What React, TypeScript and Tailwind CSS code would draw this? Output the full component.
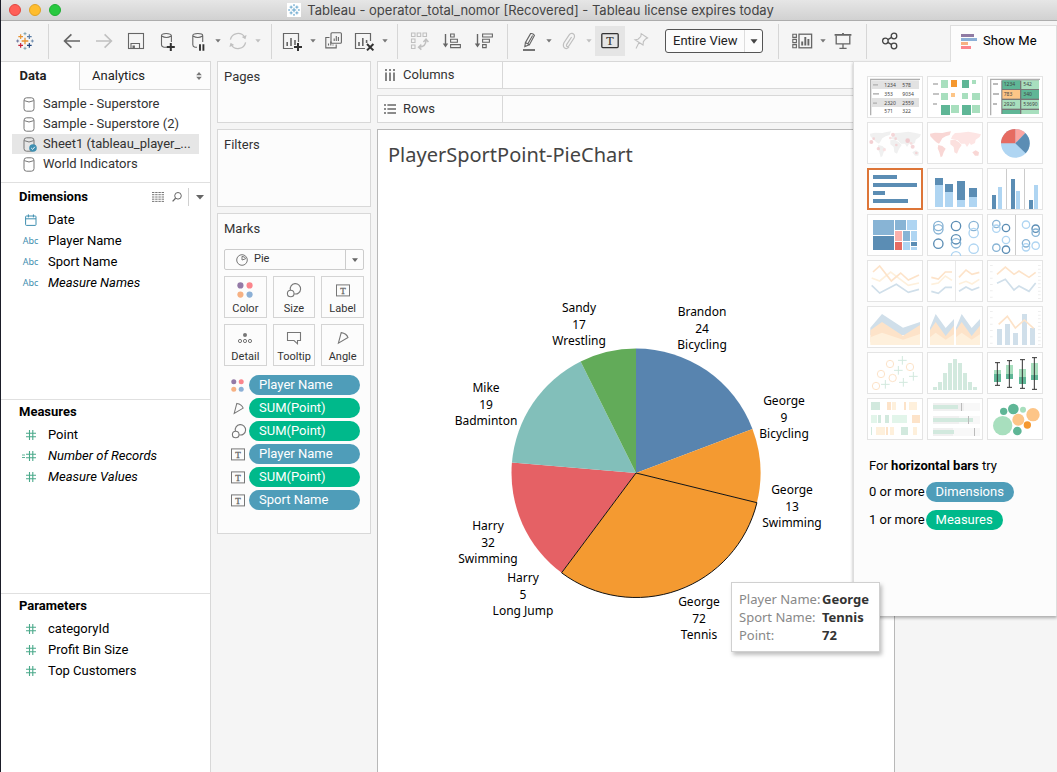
import React from "react";

type Kids = { children?: React.ReactNode };

const UI = "font-[Roboto,'Liberation_Sans',sans-serif]";
const BLUE = "#5b8db4";
const SKY = "#afd5f2";

/* ---------- small drawing helpers ---------- */

function Icon({ children, tone = "text-[#666]", size = "size-5" }: Kids & { tone?: string; size?: string }) {
  return (
    <svg viewBox="0 0 20 20" aria-hidden="true" fill="none" stroke="currentColor" strokeWidth="1.1" className={`shrink-0 overflow-visible ${size} ${tone}`}>
      {children}
    </svg>
  );
}

function Caret({ tone = "text-[#777]" }: { tone?: string }) {
  return (
    <svg viewBox="0 0 6 4" aria-hidden="true" className={`h-1 w-[6px] ${tone}`}>
      <path d="M0.3 0.3H5.7L3 3.6Z" fill="currentColor" />
    </svg>
  );
}

function Cylinder({ className = "h-[15px] w-3" }: { className?: string }) {
  return (
    <svg viewBox="0 0 12 15" aria-hidden="true" fill="none" stroke="#777" className={`shrink-0 overflow-visible ${className}`}>
      <rect x="1" y="0.8" width="10" height="13.4" rx="2.6" />
      <path d="M1.2 3.6Q6 6.4 10.8 3.6" />
    </svg>
  );
}

function Cross({ x, y, r, c, w = 2.5 }: { x: number; y: number; r: number; c: string; w?: number }) {
  return <path d={`M${x - r} ${y}H${x + r}M${x} ${y - r}V${y + r}`} stroke={c} strokeWidth={w} fill="none" />;
}

function Logo({ mono = false, className = "" }: { mono?: boolean; className?: string }) {
  const k = (c: string) => (mono ? "#4a96c4" : c);
  return (
    <svg viewBox="0 0 54 54" aria-hidden="true" className={className}>
      <Cross x={27} y={27} r={10} c={k("#e8912d")} w={3.8} />
      <Cross x={14} y={14} r={7} c={k("#e8912d")} w={3.4} />
      <Cross x={40} y={14} r={7} c={k("#5c7ea6")} w={3.4} />
      <Cross x={14} y={40} r={7} c={k("#c72037")} w={3.4} />
      <Cross x={40} y={40} r={7} c={k("#1f447e")} w={3.4} />
      <Cross x={27} y={5} r={4.5} c={k("#7199a6")} />
      <Cross x={27} y={49} r={4.5} c={k("#7199a6")} />
      <Cross x={5} y={27} r={4.5} c={k("#5c6692")} />
      <Cross x={49} y={27} r={4.5} c={k("#5c7ea6")} />
    </svg>
  );
}

function Dots({ className = "size-4" }: { className?: string }) {
  return (
    <svg viewBox="0 0 14 14" aria-hidden="true" className={className}>
      <circle cx="3" cy="3" r="2.7" fill="#9379a6" />
      <circle cx="11" cy="3" r="2.7" fill="#fb858c" />
      <circle cx="3" cy="11" r="2.7" fill="#f6b183" />
      <circle cx="11" cy="11" r="2.7" fill="#8cb0d6" />
    </svg>
  );
}

function SizeIcon({ className = "size-4" }: { className?: string }) {
  return (
    <svg viewBox="0 0 16 16" aria-hidden="true" fill="none" stroke="#777" strokeWidth="1.1" className={className}>
      <path d="M4.4 8.2A5.2 5.2 0 1 1 8.3 11.9" />
      <circle cx="4.7" cy="11.5" r="3.3" />
    </svg>
  );
}

function TIcon({ className = "h-[13px] w-[14px]" }: { className?: string }) {
  return (
    <svg viewBox="0 0 14 13" aria-hidden="true" className={className}>
      <rect x="0.5" y="0.9" width="13" height="11" fill="none" stroke="#777" />
      <text x="7" y="9.6" textAnchor="middle" fontSize="9" fill="#666" stroke="#666" strokeWidth="0.3" className="font-['Liberation_Serif',serif]">T</text>
    </svg>
  );
}

function AngleIcon({ className = "size-4" }: { className?: string }) {
  return (
    <svg viewBox="0 0 16 16" aria-hidden="true" fill="none" stroke="#777" strokeWidth="1.1" className={className}>
      <path d="M6.2 2.6L3.4 13.2L13 7.6Q11.6 3.4 6.2 2.6Z" />
    </svg>
  );
}

function Hash({ calc = false }: { calc?: boolean }) {
  return (
    <svg viewBox="0 0 20 12" aria-hidden="true" stroke="#4aa98a" strokeWidth="1.1" className="h-3 w-5 shrink-0">
      <path d="M8.5 1V11M11.8 1V11M5 4.3H15M5 7.7H15" />
      {calc && <path d="M1 5H4M1 7.5H4" strokeWidth="0.9" />}
    </svg>
  );
}

/* ---------- toolbar ---------- */

function Tool({ label, w = "w-8", active = false, children }: Kids & { label: string; w?: string; active?: boolean }) {
  return (
    <button type="button" aria-label={label} className={`flex h-[30px] shrink-0 items-center justify-center ${w} ${active ? "bg-[#e5e5e5]" : ""}`}>
      {children}
    </button>
  );
}

const Sep = ({ gap = "mx-[7px]" }: { gap?: string }) => <span className={`h-[35px] w-px shrink-0 bg-[#d6d6d6] ${gap}`} />;

function Toolbar() {
  const dim = "text-[#c0c0c0]";
  return (
    <div className="flex h-10 items-center pl-3">
      <button type="button" aria-label="Start page" className="mr-1 flex h-[30px] w-6 items-center justify-center">
        <Logo className="size-[18px]" />
      </button>
      <Sep />
      <Tool label="Undo"><Icon><path d="M18 10H2.6M9.4 3.4L2.6 10L9.4 16.6" strokeWidth="1.7" /></Icon></Tool>
      <Tool label="Redo"><Icon tone={dim}><path d="M2 10H17.4M10.6 3.4L17.4 10L10.6 16.6" strokeWidth="1.6" /></Icon></Tool>
      <Tool label="Save">
        <Icon><rect x="2.5" y="2.5" width="15" height="15" /><path d="M5 17.5V12.5H13.5V17.5" /><rect x="6.5" y="14.5" width="2.4" height="3" fill="currentColor" stroke="none" /></Icon>
      </Tool>
      <Tool label="New data source">
        <Icon><path d="M11 16.2H6Q3.5 15.8 3.5 13.8V4.6Q3.5 2.5 8.2 2.5T13.4 4.6V11M3.7 5Q8.4 8 13.2 5" /><path d="M8.8 16H16.8M12.8 12V20" stroke="#333" strokeWidth="2" /></Icon>
      </Tool>
      <Tool label="Pause auto updates" w="w-7">
        <Icon><path d="M9 16.2H7Q4.8 15.8 4.8 13.8V4.6Q4.8 2.5 9.8 2.5T14.7 4.6V11M5 5Q9.8 8 14.5 5" /><path d="M12 13.2V19.8M15.4 13.2V19.8" stroke="#333" strokeWidth="1.9" /></Icon>
      </Tool>
      <Tool label="Auto update options" w="w-3"><Caret /></Tool>
      <Tool label="Run update" w="w-7">
        <Icon tone={dim}><path d="M2.4 8.6A7.8 7.8 0 0 1 16.6 6M17.6 11.4A7.8 7.8 0 0 1 3.4 14" strokeWidth="1.3" /><path d="M18.6 4L17.4 8.2L13.8 6ZM1.4 16L2.6 11.8L6.2 14Z" fill="currentColor" stroke="none" /></Icon>
      </Tool>
      <Tool label="Update options" w="w-3"><Caret tone={dim} /></Tool>
      <Sep />
      <Tool label="New worksheet" w="w-7">
        <Icon><path d="M10 17.5H0.5V2.5H15.5V11" strokeWidth="1.2" /><path d="M4.2 11V15M8 7V15M12 9V14" strokeWidth="1.6" /><path d="M11 16H19M15 12V20" stroke="#333" strokeWidth="2" /></Icon>
      </Tool>
      <Tool label="New worksheet options" w="w-3"><Caret /></Tool>
      <Tool label="Duplicate" w="w-7">
        <Icon><rect x="8" y="1.8" width="10.4" height="10.4" rx="1" /><path d="M6.5 6.5H2.8V16.9H13.2V13.6M5.5 12.5V14.5M7.8 10.5V14.5M10 13.4V14.5M11.2 7.5V10M13.3 5V10M15.4 6V10" /></Icon>
      </Tool>
      <Tool label="Clear sheet">
        <Icon><path d="M12 17.5H2.5V2.5H17.5V10" strokeWidth="1.2" /><path d="M6 11V15M9.8 7V15M13.6 9V12" strokeWidth="1.6" /><path d="M14 13L20.4 19.4M20.4 13L14 19.4" stroke="#333" strokeWidth="2" /></Icon>
      </Tool>
      <Tool label="Clear options" w="w-3"><Caret /></Tool>
      <Sep gap="mx-1.5" />
      <Tool label="Swap rows and columns">
        <Icon tone={dim}><path d="M1.5 2H5V5.5H1.5ZM7.2 2H10.7V5.5H7.2ZM13 2H16.5V5.5H13ZM1.5 8H5V11.5H1.5ZM1.5 14H5V17.5H1.5Z" /><path d="M9 16.2Q16 16 16 9M11.4 13.6L8.6 16.2L11.4 18.6M13.4 11L16 8.2L18.4 11" strokeWidth="1.5" /></Icon>
      </Tool>
      <Tool label="Sort ascending">
        <Icon><path d="M3.5 3V14" strokeWidth="1.4" /><path d="M0.8 12.5H6.2L3.5 16.6Z" fill="currentColor" stroke="none" /><path d="M8.6 3H12.2V6H8.6ZM8.6 8.3H15.4V11.3H8.6ZM8.6 13.6H18.4V16.6H8.6Z" /></Icon>
      </Tool>
      <Tool label="Sort descending">
        <Icon><path d="M3.5 3V14" strokeWidth="1.4" /><path d="M0.8 12.5H6.2L3.5 16.6Z" fill="currentColor" stroke="none" /><path d="M8.6 3H18.4V6H8.6ZM8.6 8.3H15.4V11.3H8.6ZM8.6 13.6H12.2V16.6H8.6Z" /></Icon>
      </Tool>
      <Sep />
      <Tool label="Highlight" w="w-7">
        <Icon><path d="M6.4 11.6L11.6 2.6Q14 2 15.4 4.4L10.4 13.8ZM6.4 11.6L5.8 15.6L10.4 13.8M9 12.6L13.6 4.4" /><path d="M4 19H16" strokeWidth="1.8" /></Icon>
      </Tool>
      <Tool label="Highlight options" w="w-3"><Caret /></Tool>
      <Tool label="Group members" w="w-7">
        <Icon tone={dim}><path d="M12.6 6L7.6 13.6Q7 15.4 8.6 15.8L9.8 15L15.2 6.8Q16.4 3.4 13.2 2.4Q11.4 2 10.2 3.8L4.8 12Q3.4 16 6.4 17.4Q8.6 18 10 16" strokeWidth="1.2" /></Icon>
      </Tool>
      <Tool label="Group options" w="w-3"><Caret tone={dim} /></Tool>
      <Tool label="Show mark labels" w="w-[30px]" active>
        <Icon tone="text-[#333]"><rect x="1.8" y="2.6" width="16.4" height="14" rx="1" strokeWidth="1.3" /><text x="10" y="13.6" textAnchor="middle" fontSize="12" fill="currentColor" stroke="currentColor" strokeWidth="0.2" className="font-['Liberation_Serif',serif]">T</text></Icon>
      </Tool>
      <Tool label="Fix axes">
        <Icon tone={dim}><path d="M10.2 2.6L16.6 7L14.6 8L12.4 10.6L12 14L4 8.8L7 8.2L9.8 5.6ZM8 11.4L5 17.4" /></Icon>
      </Tool>
      <div className="relative mx-2 flex h-6 w-[98px] shrink-0 items-center">
        <select aria-label="Fit" defaultValue="Entire View" className="h-full w-full appearance-none rounded-[3px] border border-[#555] bg-[#fcfcfc] pl-[7px] text-[13px] text-[#222]">
          <option>Entire View</option>
          <option>Standard</option>
        </select>
        <span className="pointer-events-none absolute inset-y-px right-px flex w-[18px] items-center justify-center border-l border-[#ddd]">
          <svg viewBox="0 0 8 5" aria-hidden="true" className="h-[5px] w-2"><path d="M0.5 0.3H7.5L4 4.8Z" fill="#444" /></svg>
        </span>
      </div>
      <Sep />
      <Tool label="Show cards">
        <Icon><path d="M0.8 3.2H4.4V6.4H0.8ZM0.8 8.4H4.4V11.6H0.8ZM0.8 13.6H4.4V16.8H0.8Z" /><rect x="7" y="3.2" width="12.6" height="13.6" strokeWidth="1.3" /><path d="M10.2 10.6V14.6M13.3 6V14.6M16.4 8V14.6" strokeWidth="1.9" /></Icon>
      </Tool>
      <Tool label="Card options" w="w-[9px]"><Caret /></Tool>
      <Tool label="Presentation mode">
        <Icon><path d="M1.6 3.8H18.4M10 2V3.8" strokeWidth="1.8" /><path d="M3.2 4.4V12.8H16.8V4.4M10 12.8V17.2M6.4 17.4H13.6" strokeWidth="1.3" /></Icon>
      </Tool>
      <Sep />
      <Tool label="Share">
        <Icon tone="text-[#444]"><circle cx="5.4" cy="10" r="2.8" strokeWidth="1.3" /><circle cx="14" cy="5" r="2.8" strokeWidth="1.3" /><circle cx="14" cy="15" r="2.8" strokeWidth="1.3" /><path d="M7.8 8.6L11.6 6.4M7.8 11.4L11.6 13.6" strokeWidth="1.3" /></Icon>
      </Tool>
    </div>
  );
}

/* ---------- data pane ---------- */

const sources = [
  { name: "Sample - Superstore" },
  { name: "Sample - Superstore (2)" },
  { name: "Sheet1 (tableau_player_...", on: true },
  { name: "World Indicators" },
];

const abc = <span className="font-['Noto_Sans',sans-serif] text-[9px] text-[#3f8fb0]">Abc</span>;

type FieldRow = { name: string; icon: React.ReactNode; italic?: boolean };

function Field({ name, icon, italic }: FieldRow) {
  return (
    <li className="flex h-[21px] items-center">
      <span className="mr-2 flex w-[19px] shrink-0 items-center justify-center">{icon}</span>
      <span className={italic ? "italic" : ""}>{name}</span>
    </li>
  );
}

function FieldList({ rows }: { rows: FieldRow[] }) {
  return <ul className="pl-5">{rows.map((r) => <Field key={r.name} {...r} />)}</ul>;
}

const calendar = (
  <svg viewBox="0 0 12 12" aria-hidden="true" fill="none" stroke="#3f8fb0" className="size-3">
    <rect x="0.6" y="2" width="10.4" height="9.4" rx="0.8" />
    <path d="M0.6 4.8H11M3.4 0.4V3.4M8.4 0.4V3.4" />
  </svg>
);

function DataPane() {
  return (
    <aside className="flex w-[210px] shrink-0 flex-col border-t border-r border-[#d8d8d8] bg-white text-[13px] leading-4 text-black">
      <div role="tablist" className="flex h-7 shrink-0 text-[#222]">
        <button type="button" role="tab" aria-selected="true" className="w-[78px] pr-3.5 text-center font-bold">Data</button>
        <button type="button" role="tab" aria-selected="false" className="flex flex-1 items-center justify-between border-b border-l border-[#d8d8d8] bg-[#fcfcfc] pr-2 pl-3">
          Analytics
          <svg viewBox="0 0 6 8" aria-hidden="true" className="h-2 w-[6px]"><path d="M3 0L5.8 3.2H0.2ZM3 8L5.8 4.8H0.2Z" fill="#777" /></svg>
        </button>
      </div>
      <ul className="shrink-0 border-b border-[#e0e0e0] px-[11px] pt-1 pb-2 text-[#333]">
        {sources.map((s) => (
          <li key={s.name}>
            <button type="button" className={`flex h-5 w-full items-center gap-2 pl-[11px] text-left ${s.on ? "bg-[#e6e6e6]" : ""}`}>
              <span className="relative flex">
                <Cylinder />
                {s.on && (
                  <svg viewBox="0 0 8 8" aria-hidden="true" className="absolute -right-0.5 bottom-0 size-2">
                    <circle cx="4" cy="4" r="3.8" fill="#3f8fb0" />
                    <path d="M2.2 4L3.6 5.4L5.8 2.8" fill="none" stroke="#fff" strokeWidth="0.9" />
                  </svg>
                )}
              </span>
              <span className="whitespace-nowrap">{s.name}</span>
            </button>
          </li>
        ))}
      </ul>
      <section className="h-[217px] shrink-0 border-b border-[#e0e0e0]">
        <div className="flex h-[26px] items-center pt-0.5 pr-1.5 pl-[18px]">
          <h2 className="flex-1 font-bold">Dimensions</h2>
          <button type="button" aria-label="View data" className="mr-[7px]">
            <svg viewBox="0 0 12 10" aria-hidden="true" className="h-[10px] w-3"><path d="M0 0.5H12M0 2.7H12M0 5H12M0 7.2H12M0 9.4H12" stroke="#777" strokeWidth="1" strokeDasharray="2.4 0.8" /></svg>
          </button>
          <button type="button" aria-label="Find field" className="mr-[5px]">
            <svg viewBox="0 0 12 12" aria-hidden="true" fill="none" stroke="#666" className="size-3"><circle cx="7" cy="4.8" r="3.3" /><path d="M4.6 7.2L1.6 10.4" strokeWidth="1.3" /></svg>
          </button>
          <button type="button" aria-label="Pane options" className="flex h-[18px] items-center border-l border-[#d0d0d0] pl-[7px]">
            <svg viewBox="0 0 8 5" aria-hidden="true" className="h-[5px] w-2"><path d="M0 0H8L4 4.6Z" fill="#666" /></svg>
          </button>
        </div>
        <FieldList
          rows={[
            { name: "Date", icon: calendar },
            { name: "Player Name", icon: abc },
            { name: "Sport Name", icon: abc },
            { name: "Measure Names", icon: abc, italic: true },
          ]}
        />
      </section>
      <section className="h-[194px] shrink-0 border-b border-[#e0e0e0]">
        <h2 className="flex h-6 items-center pl-[18px] font-bold">Measures</h2>
        <FieldList
          rows={[
            { name: "Point", icon: <Hash /> },
            { name: "Number of Records", icon: <Hash calc />, italic: true },
            { name: "Measure Values", icon: <Hash />, italic: true },
          ]}
        />
      </section>
      <section>
        <h2 className="flex h-6 items-center pl-[18px] font-bold">Parameters</h2>
        <FieldList
          rows={[
            { name: "categoryId", icon: <Hash /> },
            { name: "Profit Bin Size", icon: <Hash /> },
            { name: "Top Customers", icon: <Hash /> },
          ]}
        />
      </section>
    </aside>
  );
}

/* ---------- cards ---------- */

const markButtons = [
  { name: "Color", icon: <Dots /> },
  { name: "Size", icon: <SizeIcon /> },
  { name: "Label", icon: <TIcon /> },
  {
    name: "Detail",
    icon: (
      <svg viewBox="0 0 16 16" aria-hidden="true" fill="none" stroke="#777" className="size-4">
        <circle cx="8" cy="5" r="2" fill="#777" stroke="none" /><circle cx="3" cy="11" r="1.6" /><circle cx="8" cy="11" r="1.6" /><circle cx="13" cy="11" r="1.6" />
      </svg>
    ),
  },
  {
    name: "Tooltip",
    icon: (
      <svg viewBox="0 0 16 16" aria-hidden="true" fill="none" stroke="#777" strokeWidth="1.1" className="size-4">
        <path d="M1.5 2.5H14.5V10.5H11.5V13.8L8 10.5H1.5Z" />
      </svg>
    ),
  },
  { name: "Angle", icon: <AngleIcon /> },
];

const pills = [
  { name: "Player Name", icon: <Dots className="size-[13px]" />, dim: true },
  { name: "SUM(Point)", icon: <AngleIcon className="size-[15px]" /> },
  { name: "SUM(Point)", icon: <SizeIcon /> },
  { name: "Player Name", icon: <TIcon />, dim: true },
  { name: "SUM(Point)", icon: <TIcon /> },
  { name: "Sport Name", icon: <TIcon />, dim: true },
];

function Card({ title, className, children }: Kids & { title: string; className: string }) {
  return (
    <section className={`border border-[#d8d8d8] bg-[#fcfcfc] px-1.5 pt-[7px] ${className}`}>
      <h2 className="text-[13px] leading-4 text-[#333]">{title}</h2>
      {children}
    </section>
  );
}

function Cards() {
  return (
    <div className="flex w-[154px] shrink-0 flex-col gap-1.5">
      <Card title="Pages" className="h-[62px]" />
      <Card title="Filters" className="h-[78px]" />
      <Card title="Marks" className="pb-[23px]">
        <div className="relative mt-3 flex h-[21px] items-center">
          <select aria-label="Mark type" defaultValue="Pie" className="h-full w-full appearance-none rounded-[2px] border border-[#ccc] bg-[#fcfcfc] pl-[29px] text-[11px] text-[#333]">
            <option>Pie</option>
            <option>Bar</option>
          </select>
          <svg viewBox="0 0 12 12" aria-hidden="true" fill="none" stroke="#777" className="pointer-events-none absolute left-3 size-3">
            <circle cx="6" cy="6" r="5.3" /><path d="M6 6V2.4Q9.4 2.6 9.6 4.8Z" />
          </svg>
          <span className="pointer-events-none absolute inset-y-px right-px flex w-[18px] items-center justify-center border-l border-[#ccc]">
            <svg viewBox="0 0 8 5" aria-hidden="true" className="h-1 w-[6px]"><path d="M0 0H8L4 5Z" fill="#666" /></svg>
          </span>
        </div>
        <div className="mt-1.5 grid grid-cols-3 gap-1.5">
          {markButtons.map((b) => (
            <button key={b.name} type="button" className="flex h-[42px] flex-col items-center justify-between border border-[#d4d4d4] bg-[#fcfcfc] pt-[5px] text-[11px] leading-4 text-[#333]">
              <span className="flex h-4 items-center">{b.icon}</span>
              {b.name}
            </button>
          ))}
        </div>
        <ul className="mt-[9px] flex flex-col gap-[3px] pr-1 pl-[5px]">
          {pills.map((p, i) => (
            <li key={i} className="flex items-center">
              <span className="flex w-5 shrink-0 items-center justify-start pl-0.5">{p.icon}</span>
              <span className={`h-5 flex-1 rounded-full pl-2.5 text-[13px] leading-5 text-white ${p.dim ? "bg-[#4f9db9]" : "bg-[#00b98b]"}`}>{p.name}</span>
            </li>
          ))}
        </ul>
      </Card>
    </div>
  );
}

/* ---------- worksheet ---------- */

function Shelf({ name, icon }: { name: string; icon: React.ReactNode }) {
  return (
    <div className="flex h-7 shrink-0 border border-[#d8d8d8] bg-[#fcfcfc]">
      <div className="flex w-[125px] items-center gap-[7px] border-r border-[#d8d8d8] pl-1.5 text-[13px] leading-4 text-[#333]">
        {icon}
        {name}
      </div>
    </div>
  );
}

const slices = [
  { from: 0, to: 69.3, color: "#5884af" },
  { from: 69.3, to: 103.8, color: "#f49a31" },
  { from: 216.7, to: 274.8, color: "#e56165" },
  { from: 274.8, to: 333.6, color: "#82bfba" },
  { from: 333.6, to: 360, color: "#62ab59" },
  { from: 103.8, to: 216.7, color: "#f49a31", outlined: true },
];

const labels = [
  { x: 266, y: 19, lines: ["Brandon", "24", "Bicycling"] },
  { x: 348, y: 108, lines: ["George", "9", "Bicycling"] },
  { x: 356, y: 197, lines: ["George", "13", "Swimming"] },
  { x: 263, y: 309, lines: ["George", "72", "Tennis"] },
  { x: 87, y: 285, lines: ["Harry", "5", "Long Jump"] },
  { x: 52, y: 233, lines: ["Harry", "32", "Swimming"] },
  { x: 50, y: 95, lines: ["Mike", "19", "Badminton"] },
  { x: 143, y: 15, lines: ["Sandy", "17", "Wrestling"] },
];

const CX = 200;
const CY = 180;
const R = 124.5;

function arc(from: number, to: number) {
  const pt = (a: number) => {
    const t = (a * Math.PI) / 180;
    return `${(CX + R * Math.sin(t)).toFixed(2)} ${(CY - R * Math.cos(t)).toFixed(2)}`;
  };
  return `M${CX} ${CY}L${pt(from)}A${R} ${R} 0 ${to - from > 180 ? 1 : 0} 1 ${pt(to)}Z`;
}

const tip = [
  ["Player Name:", "George"],
  ["Sport Name:", "Tennis"],
  ["Point:", "72"],
];

function Worksheet() {
  return (
    <div className="flex min-w-0 flex-1 flex-col gap-1.5">
      <Shelf name="Columns" icon={<svg viewBox="0 0 12 12" aria-hidden="true" className="size-3"><path d="M2 0V2M2 3.4V12M6 0V2M6 3.4V12M10 0V2M10 3.4V12" stroke="#666" strokeWidth="1.6" /></svg>} />
      <Shelf name="Rows" icon={<svg viewBox="0 0 12 12" aria-hidden="true" className="size-3"><path d="M0 2H2M3.4 2H12M0 6H2M3.4 6H12M0 10H2M3.4 10H12" stroke="#666" strokeWidth="1.6" /></svg>} />
      <section className="mr-[162px] flex flex-1 flex-col border border-b-0 border-[#b8b8b8] bg-white font-['Noto_Sans','Open_Sans',sans-serif]">
        <h1 className="px-2.5 pt-[11px] text-[20px] leading-7 text-[#444]">PlayerSportPoint-PieChart</h1>
        <div className="flex flex-1 items-center justify-center pt-[5px]">
          <div className="relative">
            <svg viewBox="0 0 400 360" role="img" aria-label="Points by player and sport" className="block h-[360px] w-[400px] overflow-visible">
              {slices.map((s) => (
                <path key={s.from} d={arc(s.from, s.to)} fill={s.color} stroke={s.outlined ? "#111" : "none"} strokeWidth="1" strokeLinejoin="round" />
              ))}
              <g fontSize="12" fill="#000" textAnchor="middle">
                {labels.map((l) => (
                  <text key={`${l.x}-${l.y}`} y={l.y + 4}>
                    {l.lines.map((t, i) => (
                      <tspan key={t} x={l.x} y={l.y + 4 + i * 16.5}>{t}</tspan>
                    ))}
                  </text>
                ))}
              </g>
            </svg>
            <div role="tooltip" className="absolute top-[289px] left-[295px] z-20 border border-[#d0d0d0] bg-white px-[7px] py-[7px] shadow-[2px_3px_4px_rgba(0,0,0,0.25)]">
              <dl className="grid w-[133px] grid-cols-[83px_auto] text-[13px] leading-[18px]">
                {tip.map(([k, v]) => (
                  <React.Fragment key={k}>
                    <dt className="whitespace-nowrap text-[#888]">{k}</dt>
                    <dd className="font-bold text-[#333]">{v}</dd>
                  </React.Fragment>
                ))}
              </dl>
            </div>
          </div>
        </div>
      </section>
    </div>
  );
}

/* ---------- show me ---------- */

type Rect = [number, number, number, number, string];
const Rects = ({ list }: { list: Rect[] }) => (
  <>{list.map(([x, y, x2, y2, c], i) => <rect key={i} x={x} y={y} width={x2 - x} height={y2 - y} fill={c} />)}</>
);
const Rings = ({ list, r, w = 3 }: { list: [number, number, string][]; r: number; w?: number }) => (
  <>{list.map(([x, y, c], i) => <circle key={i} cx={x} cy={y} r={r} stroke={c} strokeWidth={w} fill="none" />)}</>
);
const Discs = ({ list }: { list: [number, number, number, string][] }) => (
  <>{list.map(([x, y, r, c], i) => <circle key={i} cx={x} cy={y} r={r} fill={c} />)}</>
);
const Line = ({ p, c, w = 5 }: { p: string; c: string; w?: number }) => <polyline points={p} fill="none" stroke={c} strokeWidth={w} />;
const Num = ({ x, y, children }: Kids & { x: number; y: number }) => (
  <text x={x} y={y} fontSize="15" fill="#444" className="font-['Noto_Sans',sans-serif]">{children}</text>
);

const G1 = "#a8dfbe";
const G2 = "#5fb696";
const O1 = "#fdc587";
const O2 = "#f5982f";
const PALE = "#d2e9de";
const PO = "#fde3c9";
const PY = "#fef0dc";
const PB = "#d0dfea";
const MB = "#88b4d5";

const continents = [
  "9,35 24,32 46,33 59,30 72,28 68,39 56,43 46,49 40,59 36,65 28,61 20,53 10,43",
  "34,69 46,72 56,80 50,91 46,103 41,106 37,91 32,79",
  "70,55 84,53 96,61 104,69 96,81 90,95 82,91 80,75 70,67",
  "72,51 76,41 84,33 100,32 124,29 146,33 162,37 158,45 146,53 144,63 132,69 128,63 120,75 114,65 102,65 92,55",
  "136,91 146,85 156,91 154,101 144,101",
];

type Thumb = { name: string; at: string; art: React.ReactNode; selected?: boolean };

const thumbs: Thumb[] = [
  {
    name: "Text table", at: "36 33",
    art: (
      <>
        <path d="M47 151V43H195" stroke="#b0b0b0" strokeWidth="4" fill="none" />
        <Rects list={[[49, 46, 192, 72, "#e2e2e2"], [49, 99, 192, 126, "#e2e2e2"], [54, 57, 69, 62, "#bbb"], [54, 84, 72, 89, "#bbb"], [54, 112, 66, 117, "#bbb"]]} />
        <Num x={88} y={65}>1234</Num><Num x={142} y={65}>578</Num>
        <Num x={88} y={92}>353</Num><Num x={142} y={92}>9034</Num>
        <Num x={88} y={119}>2320</Num><Num x={142} y={119}>2559</Num>
        <Num x={88} y={144}>571</Num><Num x={142} y={144}>322</Num>
      </>
    ),
  },
  {
    name: "Heat map", at: "216 33",
    art: <Rects list={[[234, 54, 249, 60, "#c4c4c4"], [234, 84, 252, 90, "#c4c4c4"], [234, 114, 246, 120, "#c4c4c4"], [258, 45, 279, 69, G1], [288, 45, 306, 66, O2], [321, 45, 342, 69, G2], [351, 45, 363, 57, G1], [258, 84, 279, 105, G1], [288, 84, 300, 96, O1], [321, 84, 339, 102, G1], [351, 84, 375, 105, G1], [258, 120, 285, 150, G2], [288, 120, 312, 144, G1], [321, 120, 348, 150, G2], [351, 120, 375, 144, G1]]} />,
  },
  {
    name: "Highlight table", at: "396 33",
    art: (
      <>
        <path d="M407 151V43H555" stroke="#b0b0b0" strokeWidth="4" fill="none" />
        <Rects list={[[414, 54, 429, 60, "#bbb"], [414, 84, 432, 90, "#bbb"], [414, 114, 426, 120, "#bbb"], [439, 46, 552, 147, "#777"], [442, 46, 495, 72, G2], [499, 46, 552, 72, G1], [442, 75, 495, 101, O1], [499, 75, 552, 101, G2], [442, 105, 495, 131, G1], [499, 105, 552, 131, G1], [442, 135, 495, 147, G2], [499, 135, 552, 147, G1]]} />
        <Num x={446} y={64}>1234</Num><Num x={505} y={64}>542</Num>
        <Num x={446} y={94}>783</Num><Num x={505} y={94}>340</Num>
        <Num x={446} y={124}>2920</Num><Num x={505} y={124}>53690</Num>
      </>
    ),
  },
  {
    name: "Symbol map", at: "0 0",
    art: (
      <>
        {continents.map((c) => <polygon key={c} points={c} fill="#f0f0f0" />)}
        <g fillOpacity="0.8"><Discs list={[[13, 60, 6, "#f0c4c8"], [78, 38, 6, "#f3cdd0"], [122, 56, 7, "#efc0c5"], [137, 74, 6, "#f3cdd0"], [34, 80, 5, "#f3cdd0"], [86, 50, 4, "#f3cdd0"], [20, 50, 4, "#f3cdd0"], [52, 83, 5, "#fadfe0"], [148, 93, 4, "#f3cdd0"], [88, 69, 4, "#f3cdd0"], [70, 48, 4, "#f8d8d8"], [132, 64, 4, "#f8d8d8"]]} /></g>
      </>
    ),
  },
  {
    name: "Map", at: "0 0",
    art: <>{continents.map((c, i) => <polygon key={c} points={c} fill={["#f9d7d5", "#f9d7d5", "#fbe0de", "#fde5e4", "#f9d7d5"][i]} />)}</>,
  },
  {
    name: "Pie chart", at: "396 171",
    art: (
      <>
        <circle cx="481" cy="235" r="43" fill={SKY} />
        <path d="M481 235V192A43 43 0 0 1 511 204Z" fill="#fba5a2" />
        <path d="M481 235L511 204A43 43 0 0 1 512 265Z" fill={BLUE} />
        <path d="M481 235H438A43 43 0 0 1 481 192Z" fill="#e66b62" />
      </>
    ),
  },
  {
    name: "Horizontal bars", at: "36 309", selected: true,
    art: <Rects list={[[54, 330, 126, 342, BLUE], [54, 354, 186, 366, BLUE], [54, 378, 90, 390, BLUE], [54, 402, 159, 414, BLUE]]} />,
  },
  {
    name: "Stacked bars", at: "216 309",
    art: <Rects list={[[240, 339, 264, 360, BLUE], [240, 360, 264, 426, SKY], [270, 357, 294, 381, BLUE], [270, 381, 294, 426, SKY], [306, 348, 330, 405, BLUE], [306, 405, 330, 426, SKY], [342, 369, 366, 396, BLUE], [342, 396, 366, 426, SKY]]} />,
  },
  {
    name: "Side-by-side bars", at: "396 309",
    art: <Rects list={[[453, 312, 456, 432, "#ccc"], [507, 312, 510, 432, "#ccc"], [411, 390, 423, 432, BLUE], [429, 366, 441, 432, SKY], [468, 342, 480, 432, BLUE], [483, 378, 495, 432, SKY], [522, 405, 534, 432, BLUE], [537, 360, 549, 432, SKY]]} />,
  },
  {
    name: "Treemap", at: "36 447",
    art: <Rects list={[[54, 465, 117, 510, MB], [54, 513, 117, 555, BLUE], [120, 465, 153, 495, MB], [156, 465, 186, 495, SKY], [120, 498, 141, 528, "#fbb0ab"], [144, 498, 165, 528, MB], [168, 498, 186, 528, SKY], [120, 531, 141, 555, "#e66b62"], [144, 531, 165, 555, SKY], [168, 531, 186, 543, BLUE], [168, 546, 186, 555, SKY]]} />,
  },
  {
    name: "Circle views", at: "216 447",
    art: <Rings r={14} w={4} list={[[250, 483, MB], [250, 493, MB], [250, 536, BLUE], [303, 483, BLUE], [303, 523, BLUE], [303, 535, MB], [303, 574, SKY], [356, 483, MB], [356, 504, SKY], [356, 551, SKY]]} />,
  },
  {
    name: "Side-by-side circles", at: "396 447",
    art: (
      <>
        <path d="M481.5 450V570" stroke="#ccc" strokeWidth="3" />
        <Rings r={11} w={4} list={[[424, 477, MB], [424, 491, SKY], [453, 489, BLUE], [453, 525, SKY], [424, 548, MB], [453, 554, BLUE], [513, 479, SKY], [542, 491, BLUE], [542, 503, MB], [513, 535, MB], [513, 547, SKY], [542, 542, SKY]]} />
      </>
    ),
  },
  {
    name: "Continuous lines", at: "36 15",
    art: <><Line c={PY} p="50,69 74,78 107,51 160,91 192,84" /><Line c={PO} p="54,51 74,33 109,78 137,54 160,75 192,60" /><Line c={PB} p="50,91 74,114 124,88 160,112 192,103" /></>,
  },
  {
    name: "Discrete lines", at: "216 15",
    art: <><path d="M301.5 18V138" stroke="#e8e8e8" strokeWidth="3" /><Line c={PO} p="229,67 250,72 271,51 291,51" /><Line c={PO} p="312,67 333,45 351,58 373,52" /><Line c={PY} p="229,88 250,84 271,63 291,76" /><Line c={PY} p="312,87 333,79 351,87 373,73" /><Line c={PB} p="229,109 250,115 271,97 291,97" /><Line c={PB} p="312,109 333,96 351,105 373,97" /></>,
  },
  {
    name: "Dual lines", at: "396 15",
    art: <><path d="M409 30V132" stroke="#eee" strokeWidth="8" strokeDasharray="3 16" /><path d="M553 30V132" stroke="#eee" strokeWidth="8" strokeDasharray="3 8" /><Line c={PO} p="426,58 451,36 477,58 492,48 522,67 542,52" /><Line c={PB} p="426,85 451,73 477,105 492,93 522,109 542,84" /></>,
  },
  {
    name: "Area, continuous", at: "36 153",
    art: <><polygon points="46,218 81,177 144,218 195,201 195,240 46,240" fill={PB} /><polygon points="46,226 81,201 144,242 195,210 195,262 46,262" fill={PO} /><polygon points="46,247 81,233 144,254 195,237 195,270 46,270" fill={PY} /></>,
  },
  {
    name: "Area, discrete", at: "216 153",
    art: (
      <>
        {[0, 78].map((dx) => (
          <g key={dx} transform={`translate(${dx} 0)`}>
            <polygon points="225,218 242,177 272,219 297,192 297,262 225,262" fill={PB} />
            <polygon points="225,226 242,201 272,243 297,212 297,262 225,262" fill={PO} />
            <polygon points="225,247 242,233 272,254 297,238 297,270 225,270" fill={PY} />
          </g>
        ))}
        <path d="M300 160V272" stroke="#fff" strokeWidth="5" />
      </>
    ),
  },
  {
    name: "Dual combination", at: "396 153",
    art: <><path d="M409 168V272" stroke="#eee" strokeWidth="8" strokeDasharray="3 16" /><path d="M553 168V272" stroke="#eee" strokeWidth="8" strokeDasharray="3 8" /><Rects list={[[426, 222, 441, 270, PB], [450, 207, 465, 270, PB], [474, 234, 489, 270, PB], [501, 177, 516, 270, PB], [525, 219, 540, 270, PB]]} /><Line c={PO} p="431,208 457,184 481,219 508,195 536,220" /></>,
  },
  {
    name: "Scatter plot", at: "36 291",
    art: <><Rings r={11} list={[[105, 327, PO], [165, 336, PO], [78, 357, PO], [113, 369, PO], [63, 393, PO]]} /><Cross x={142} y={316} r={13} c={PALE} w={3} /><Cross x={130} y={346} r={13} c={PALE} w={3} /><Cross x={175} y={364} r={13} c={PALE} w={3} /><Cross x={91} y={388} r={13} c={PALE} w={3} /><Cross x={145} y={382} r={13} c={PALE} w={3} /></>,
  },
  {
    name: "Histogram", at: "216 291",
    art: <Rects list={[[234, 396, 246, 405, PALE], [249, 381, 261, 405, PALE], [264, 354, 276, 405, PALE], [279, 324, 291, 405, PALE], [294, 312, 306, 405, PALE], [309, 324, 321, 405, PALE], [324, 354, 336, 405, PALE], [339, 381, 351, 405, PALE], [354, 396, 366, 405, PALE]]} />,
  },
  {
    name: "Box-and-whisker plot", at: "396 291",
    art: <><Rects list={[[417, 345, 438, 357, G1], [417, 357, 438, 381, G2], [453, 330, 474, 357, G1], [453, 357, 474, 372, G2], [492, 342, 513, 366, G1], [492, 366, 513, 387, G2], [528, 324, 549, 360, G1], [528, 360, 549, 375, G2]]} /><path d="M427 323V391M463 317V397M502 314V400M538 308V403M420 323H435M420 391H435M456 317H471M456 397H471M495 314H510M495 400H510M531 308H546M531 403H546" stroke="#333" strokeWidth="3" /></>,
  },
  {
    name: "Gantt chart", at: "36 429",
    art: <Rects list={[[48, 441, 75, 465, PALE], [96, 441, 108, 465, PO], [111, 441, 123, 465, PY], [147, 441, 153, 465, PO], [162, 441, 186, 465, PY], [48, 480, 66, 504, "#e2f5ea"], [69, 480, 78, 504, PALE], [90, 480, 102, 504, PALE], [111, 480, 156, 504, "#e2f5ea"], [171, 480, 195, 504, PO], [48, 516, 51, 540, PALE], [63, 516, 90, 540, PY], [93, 516, 99, 540, PO], [105, 516, 117, 540, PY], [138, 516, 159, 540, PALE], [174, 516, 186, 540, PY]]} />,
  },
  {
    name: "Bullet graph", at: "216 429",
    art: <Rects list={[[234, 444, 375, 468, "#f8f8f8"], [234, 483, 375, 507, "#f8f8f8"], [234, 519, 375, 543, "#f8f8f8"], [234, 444, 327, 468, "#f0f0f0"], [234, 483, 312, 507, "#f0f0f0"], [234, 519, 294, 543, "#f0f0f0"], [234, 450, 309, 462, PALE], [234, 489, 354, 501, PALE], [234, 525, 297, 537, PALE], [318, 444, 321, 468, "#bbb"], [339, 483, 342, 507, "#bbb"], [357, 519, 360, 543, "#bbb"]]} />,
  },
  {
    name: "Packed bubbles", at: "396 429",
    art: <Discs list={[[443, 512, 29, G1], [446, 469, 11, G2], [475, 462, 16, G2], [504, 464, 9, G1], [534, 479, 20, O1], [490, 494, 18, O1], [517, 510, 11, O2], [487, 528, 13, G2]]} />,
  },
];

function ShowMe() {
  return (
    <aside aria-label="Show Me" className="absolute top-[61px] right-0 z-10 h-[555px] w-[204px] border-t border-r border-l border-[#dedede] bg-[#fcfcfc] px-[13px] pt-[14px] text-[13px] text-black shadow-[0_2px_3px_rgba(0,0,0,0.3)]">
      <div className="grid grid-cols-3 gap-1">
        {thumbs.map((t) => (
          <button
            key={t.name}
            type="button"
            aria-label={t.name}
            className={`bg-white ring-inset ${t.selected ? "ring-2 ring-[#dd7538]" : "ring-1 ring-[#e4e4e4]"}`}
          >
            <svg viewBox={`${t.at} 168 126`} aria-hidden="true" className="block h-[42px] w-full">{t.art}</svg>
          </button>
        ))}
      </div>
      <p className="mt-[18px] ml-0.5 leading-4">For <b>horizontal bars</b> try</p>
      <p className="mt-2 ml-0.5 flex items-center gap-px leading-5">0 or more <span className="rounded-full bg-[#4f9db9] px-2.5 text-white">Dimensions</span></p>
      <p className="mt-2 ml-0.5 flex items-center gap-px leading-5">1 or more <span className="rounded-full bg-[#00b98b] px-2.5 text-white">Measures</span></p>
    </aside>
  );
}

/* ---------- window ---------- */

export default function App() {
  return (
    <div className={`relative flex min-h-screen flex-col overflow-hidden border-l border-[#1b1d28] bg-[#f5f5f5] ${UI}`}>
      <header className="flex h-[21px] shrink-0 items-center border-b border-[#adadad] bg-linear-to-b from-[#e6e6e6] to-[#d1d1d1] pl-2">
        <div className="flex w-[52px] gap-2">
          <button type="button" aria-label="Close" className="size-3 rounded-full border border-[#e2463f] bg-[#ff5f57]" />
          <button type="button" aria-label="Minimize" className="size-3 rounded-full border border-[#e1a325] bg-[#ffbd2e]" />
          <button type="button" aria-label="Zoom" className="size-3 rounded-full border border-[#1fae34] bg-[#28c940]" />
        </div>
        <div className="flex flex-1 items-center justify-center gap-[6px] pr-[57px] text-[13px] leading-4 whitespace-nowrap text-[#444]">
          <span className="flex size-[14px] items-center justify-center bg-white"><Logo mono className="size-3" /></span>
          <span className="font-[Inter,sans-serif]">Tableau - operator_total_nomor [Recovered] - Tableau license expires today</span>
        </div>
      </header>
      <div className="flex h-10 shrink-0 items-end justify-between">
        <Toolbar />
        <button type="button" className="relative z-20 -mb-px flex h-[37px] w-[107px] shrink-0 items-center gap-1.5 border border-b-0 border-[#dedede] bg-[#fcfcfc] pb-1.5 pl-2.5 text-[13px] text-black">
          <svg viewBox="0 0 16 15" aria-hidden="true" className="h-[15px] w-4">
            <path fill="#8f7aa3" d="M0 0H13V3H0Z" /><path fill="#8cb0d6" d="M0 4H16V7H0Z" /><path fill="#f6b183" d="M0 8H7V11H0Z" /><path fill="#fb858c" d="M0 12H10V15H0Z" />
          </svg>
          Show Me
        </button>
      </div>
      <main className="flex flex-1 items-stretch gap-1.5">
        <DataPane />
        <Cards />
        <Worksheet />
      </main>
      <ShowMe />
    </div>
  );
}
